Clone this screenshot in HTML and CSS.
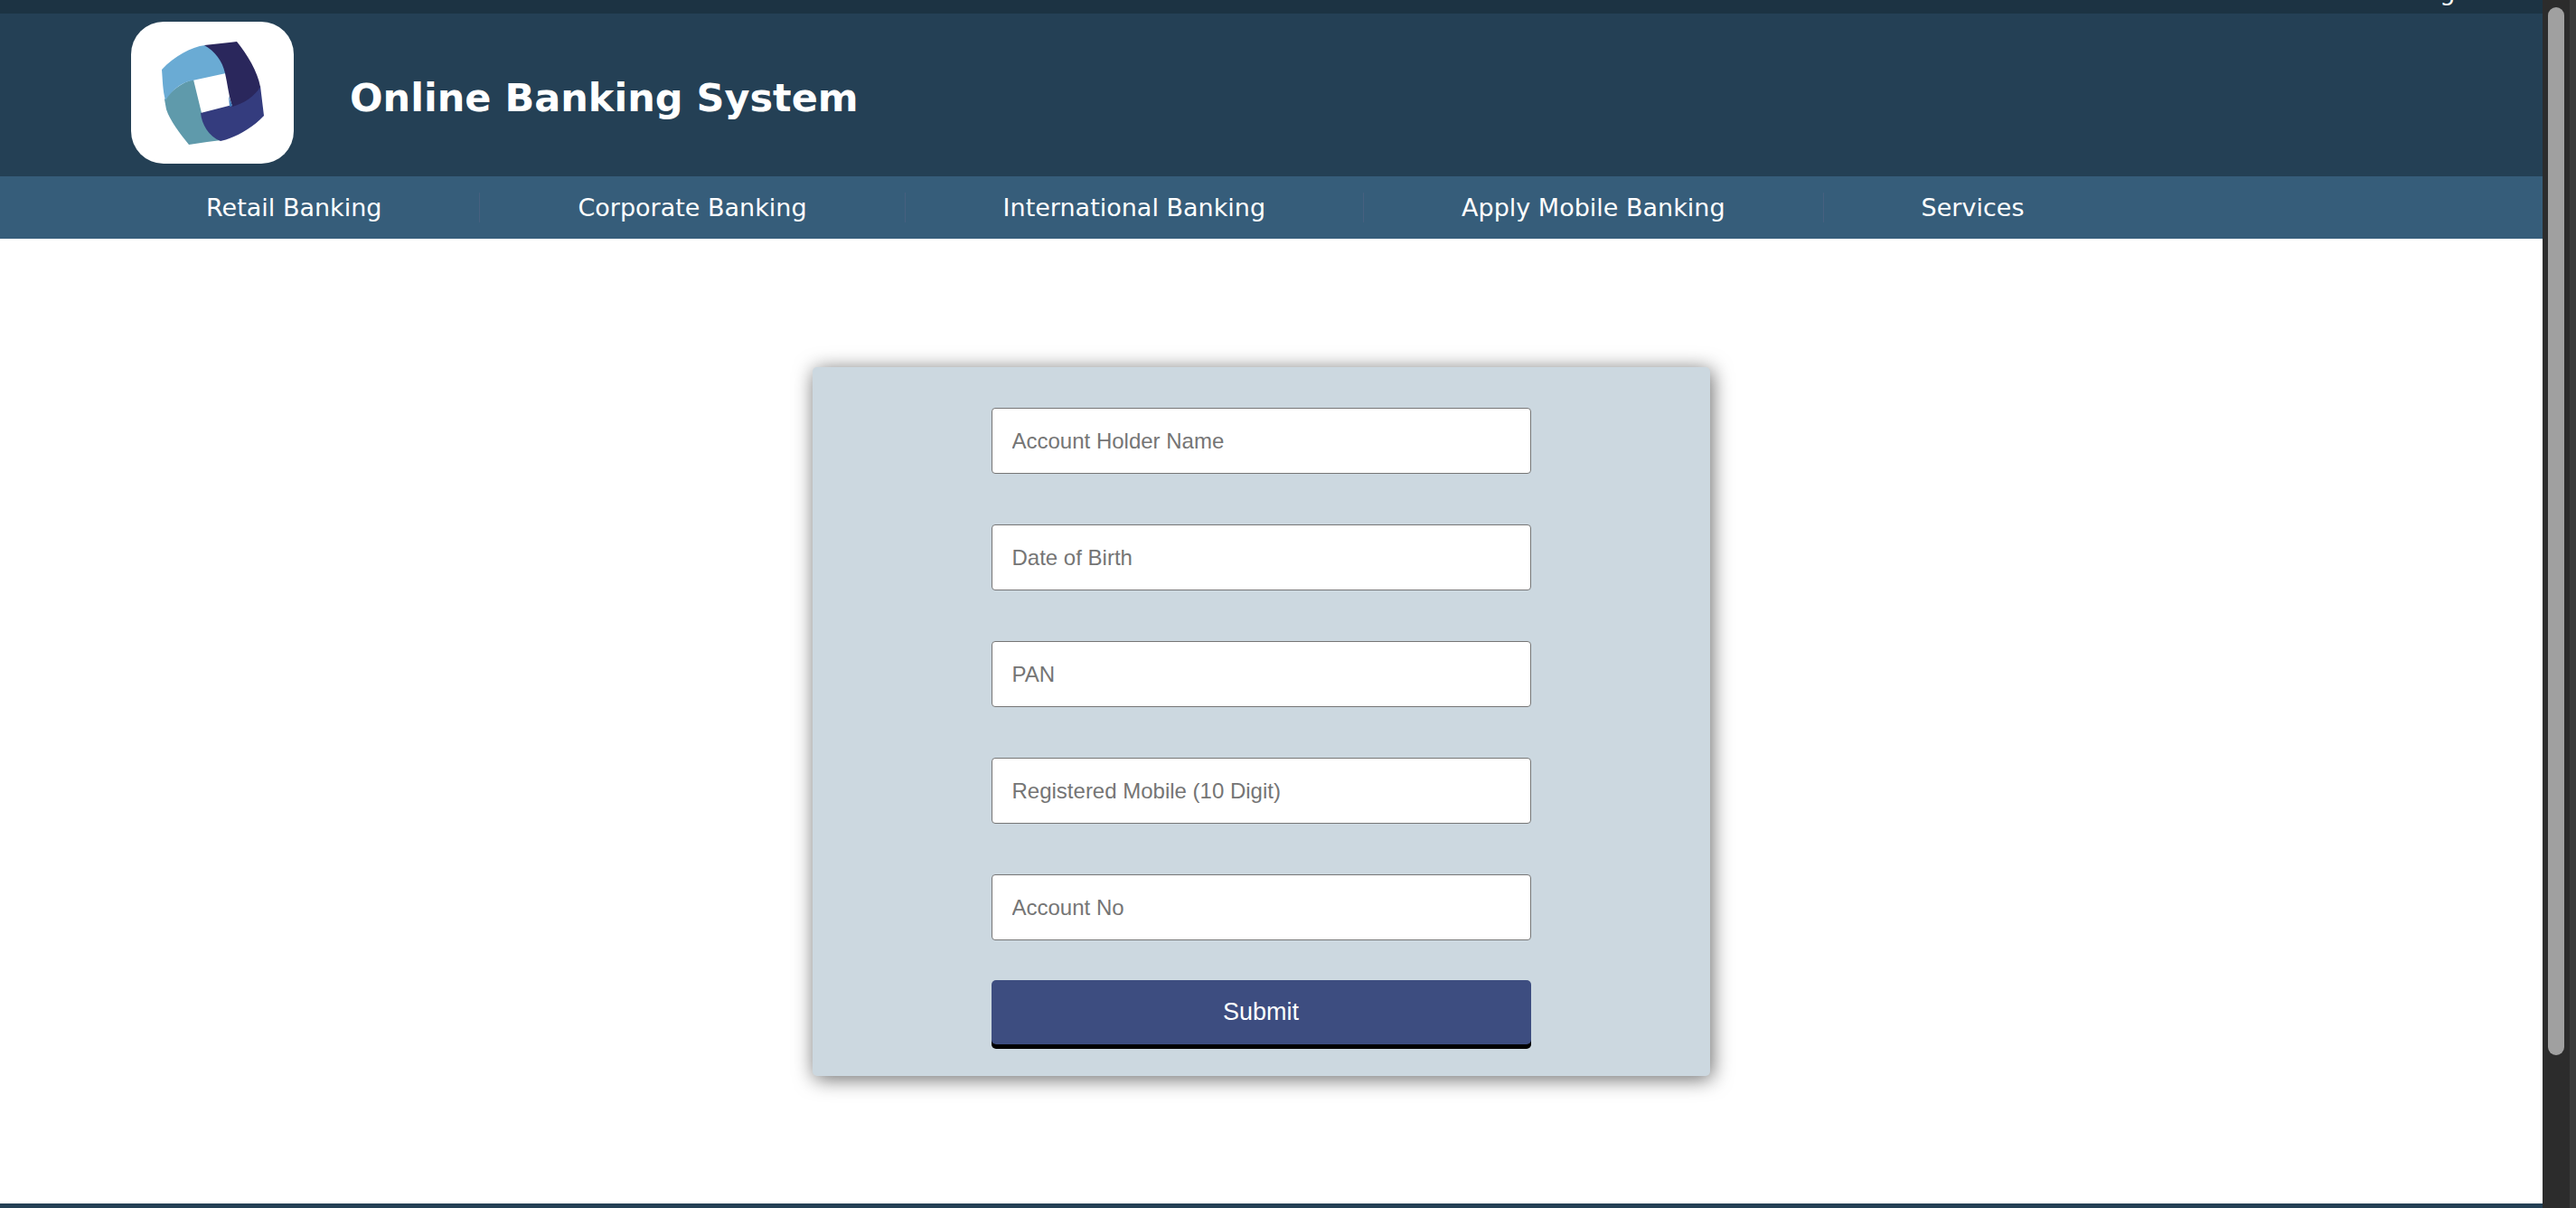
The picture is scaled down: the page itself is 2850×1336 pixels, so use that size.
FILE: index.html
```html
<!DOCTYPE html>
<html lang="en">
<head>
<meta charset="utf-8">
<title>Online Banking System</title>
<link rel="stylesheet" href="styles.css">
</head>
<body>
<div class="page">
  <div class="topbar"><a class="topbar-link" href="#">Login</a></div>
  <header class="header">
    <div class="logo">
      <svg viewBox="0 0 180 157" role="img" aria-label="Bank logo">
        <path fill="#5f9aab" d="M37 86C45 76 56 67 69 64L78 101C79 115 88 126 100 131Q82 133 64 136C54 124 43 109 39 97Z"/>
        <path fill="#6aabd4" d="M34 53C48 38 66 28 82 26C96 33 104 45 105 57L68 65C55 67 45 76 38 87C35 76 35 65 34 53Z"/>
        <path fill="#343c7e" d="M143 71L147 104C133 119 115 128 99 132C86 127 78 113 77 101L112 92C126 89 136 81 143 71Z"/>
        <path fill="#2a275c" d="M81 26L117 22C129 37 140 55 143 72C137 82 126 90 112 94C108 82 107 70 104 57C101 43 93 33 81 26Z"/>
        <path fill="#4580bd" d="M108 82L112 93L109 94Z"/>
      </svg>
    </div>
    <h1 class="title">Online Banking System</h1>
  </header>
  <nav class="nav">
    <a class="nav-link" href="#">Retail Banking</a>
    <a class="nav-link" href="#">Corporate Banking</a>
    <a class="nav-link" href="#">International Banking</a>
    <a class="nav-link" href="#">Apply Mobile Banking</a>
    <a class="nav-link" href="#">Services</a>
  </nav>
  <main class="main">
    <form class="card">
      <input class="field" type="text" aria-label="Account Holder Name" placeholder="Account Holder Name">
      <input class="field" type="text" aria-label="Date of Birth" placeholder="Date of Birth">
      <input class="field" type="text" aria-label="PAN" placeholder="PAN">
      <input class="field" type="text" aria-label="Registered Mobile" placeholder="Registered Mobile (10 Digit)">
      <input class="field" type="text" aria-label="Account No" placeholder="Account No">
      <button class="submit" type="submit">Submit</button>
    </form>
  </main>
  <footer class="footer"></footer>
</div>
<div class="scrollbar"><div class="thumb"></div></div>
</body>
</html>
```
FILE: styles.css
```css
* { box-sizing: border-box; }

body {
  margin: 0;
  display: flex;
  min-height: 100vh;
  background: #fff;
  font-family: "DejaVu Sans", Verdana, sans-serif;
}

.page {
  flex: 1;
  display: flex;
  flex-direction: column;
}

.topbar {
  height: 15px;
  display: flex;
  justify-content: flex-end;
  align-items: flex-end;
  padding: 0 72px 8px 0;
  overflow: hidden;
  background: #1c3343;
}

.topbar-link {
  color: #fff;
  font-size: 27px;
  line-height: 32px;
  text-decoration: none;
}

.header {
  display: flex;
  align-items: center;
  gap: 62px;
  height: 180px;
  padding: 0 145px 5px;
  background: #244055;
}

.logo {
  width: 180px;
  height: 157px;
  border-radius: 36px;
  background: #fff;
}

.logo svg { display: block; }

.title {
  margin: 0;
  padding-top: 10px;
  color: #fff;
  font-size: 43px;
  line-height: 52px;
}

.nav {
  display: flex;
  align-items: center;
  height: 69px;
  padding: 0 120px;
  background: #365d7a;
}

.nav-link {
  padding: 0 108px;
  border-right: 1px solid #46607f;
  color: #fff;
  font-size: 27px;
  line-height: 33px;
  text-decoration: none;
}

.nav-link:last-child { border-right: 0; }

.main {
  flex: 1;
  display: flex;
  justify-content: center;
  align-items: flex-start;
  padding: 142px 23px 0 0;
}

.card {
  display: flex;
  flex-direction: column;
  align-items: center;
  width: 993px;
  padding: 45px 0 35px;
  border-radius: 5px;
  background: #ccd8e0;
  box-shadow: 2px 3px 22px rgba(0, 0, 0, 0.6);
}

.field {
  width: 597px;
  height: 73px;
  margin-bottom: 56px;
  padding: 0 22px;
  border: 1px solid #767676;
  border-radius: 4px;
  background: #fff;
  font-family: "Liberation Sans", Arial, sans-serif;
  font-size: 24px;
}

.field::placeholder { color: #757575; }

.submit {
  width: 597px;
  height: 71px;
  margin-top: -12px;
  border: 0;
  border-radius: 5px;
  background: #3d4d80;
  box-shadow: 0 5px #000;
  color: #fff;
  font-family: "Liberation Sans", Arial, sans-serif;
  font-size: 27px;
}

.footer {
  height: 5px;
  background: #244055;
}

.scrollbar {
  width: 37px;
  padding: 8px 6px 0;
  border-right: 7px solid #3b3b3b;
  background: #2c2c2c;
}

.thumb {
  width: 18px;
  height: 1159px;
  max-height: calc(100vh - 16px);
  border-radius: 9px;
  background: #a0a0a0;
}
```
